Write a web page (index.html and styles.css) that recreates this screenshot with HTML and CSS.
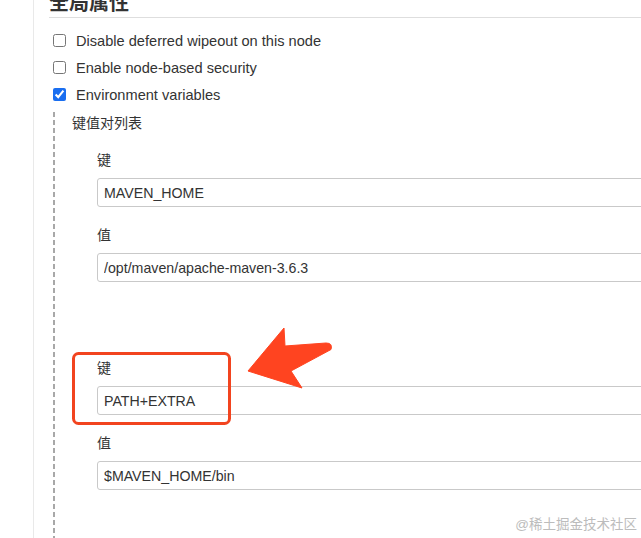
FILE: index.html
```html
<!DOCTYPE html>
<html lang="zh">
<head>
<meta charset="utf-8">
<title>全局属性</title>
<link rel="stylesheet" href="styles.css">
</head>
<body>
<div class="page">
  <section class="section">
    <h2 class="section-title">全局属性</h2>
    <div class="options">
      <label class="option"><input class="checkbox" type="checkbox"><span>Disable deferred wipeout on this node</span></label>
      <label class="option"><input class="checkbox" type="checkbox"><span>Enable node-based security</span></label>
      <label class="option"><input class="checkbox" type="checkbox" checked><span>Environment variables</span></label>
    </div>
    <div class="nested">
      <div class="nested-title">键值对列表</div>
      <div class="entries">
        <div class="entry">
          <div class="field">
            <div class="field-label">键</div>
            <input class="text-input" type="text" value="MAVEN_HOME">
          </div>
          <div class="field">
            <div class="field-label">值</div>
            <input class="text-input" type="text" value="/opt/maven/apache-maven-3.6.3">
          </div>
        </div>
        <div class="entry">
          <div class="field">
            <div class="field-label">键</div>
            <input class="text-input" type="text" value="PATH+EXTRA">
          </div>
          <div class="field">
            <div class="field-label">值</div>
            <input class="text-input" type="text" value="$MAVEN_HOME/bin">
          </div>
        </div>
      </div>
    </div>
  </section>
</div>
<svg class="annotation" width="641" height="538" viewBox="0 0 641 538" aria-hidden="true">
  <rect x="73.5" y="353.5" width="156" height="70" rx="5" ry="5" fill="none" stroke="#f2441f" stroke-width="3"/>
  <path d="M248 371 L284 328 L285 346 L326 343 Q333 343 331 349.5 L291 371 L302 388 Z" fill="#ff4420" stroke="#ff4420" stroke-width="1" stroke-linejoin="round"/>
</svg>
<div class="watermark">@稀土掘金技术社区</div>
</body>
</html>
```

FILE: styles.css
```css
html, body {
  margin: 0;
  height: 100%;
  overflow: hidden;
  background: #fff;
}

body {
  font-family: "Liberation Sans", "Noto Sans CJK SC", sans-serif;
  font-size: 14px;
  color: #333;
}

.page {
  margin-left: 33px;
  border-left: 1px solid #e9e9e9;
  min-height: 100%;
  padding-left: 15px;
}

.section-title {
  margin: -8px 0 0;
  font-size: 20px;
  line-height: 22px;
  font-weight: bold;
  padding-bottom: 3px;
  border-bottom: 1px solid #dedede;
}

.options {
  margin-top: 9px;
  display: flex;
  flex-direction: column;
}

.option {
  display: flex;
  align-items: center;
  height: 27px;
  gap: 10px;
  padding-left: 4px;
  font-size: 14.6px;
}

.checkbox {
  margin: 0;
  width: 13px;
  height: 13px;
  accent-color: #1a6ef0;
}

.nested {
  margin: 4px 0 0 4px;
  padding: 1px 0 120px 19px;
  background-image: linear-gradient(#a8a8a8 5px, transparent 5px);
  background-size: 2px 8px;
  background-repeat: repeat-y;
  background-position: 0 0;
}

.nested-title {
  line-height: 20px;
}

.entries {
  padding-left: 25px;
}

.entry {
  padding: 18px 0 59px;
}

.field + .field {
  margin-top: 19px;
}

.field-label {
  line-height: 19px;
  margin-bottom: 8px;
}

.text-input {
  display: block;
  box-sizing: border-box;
  width: 620px;
  height: 29px;
  margin: 0;
  padding: 0 6px;
  border: 1px solid #c9c9c9;
  border-radius: 3px;
  font-family: "Liberation Sans", "Noto Sans CJK SC", sans-serif;
  font-size: 14.2px;
  color: #333;
  background: #fff;
  outline: none;
}

.annotation {
  position: absolute;
  left: 0;
  top: 0;
  pointer-events: none;
}

.watermark {
  position: absolute;
  right: 4px;
  top: 515px;
  font-size: 13.5px;
  line-height: 20px;
  color: #bcbcbc;
  font-family: "Liberation Sans", "Noto Sans CJK SC", sans-serif;
}
```
